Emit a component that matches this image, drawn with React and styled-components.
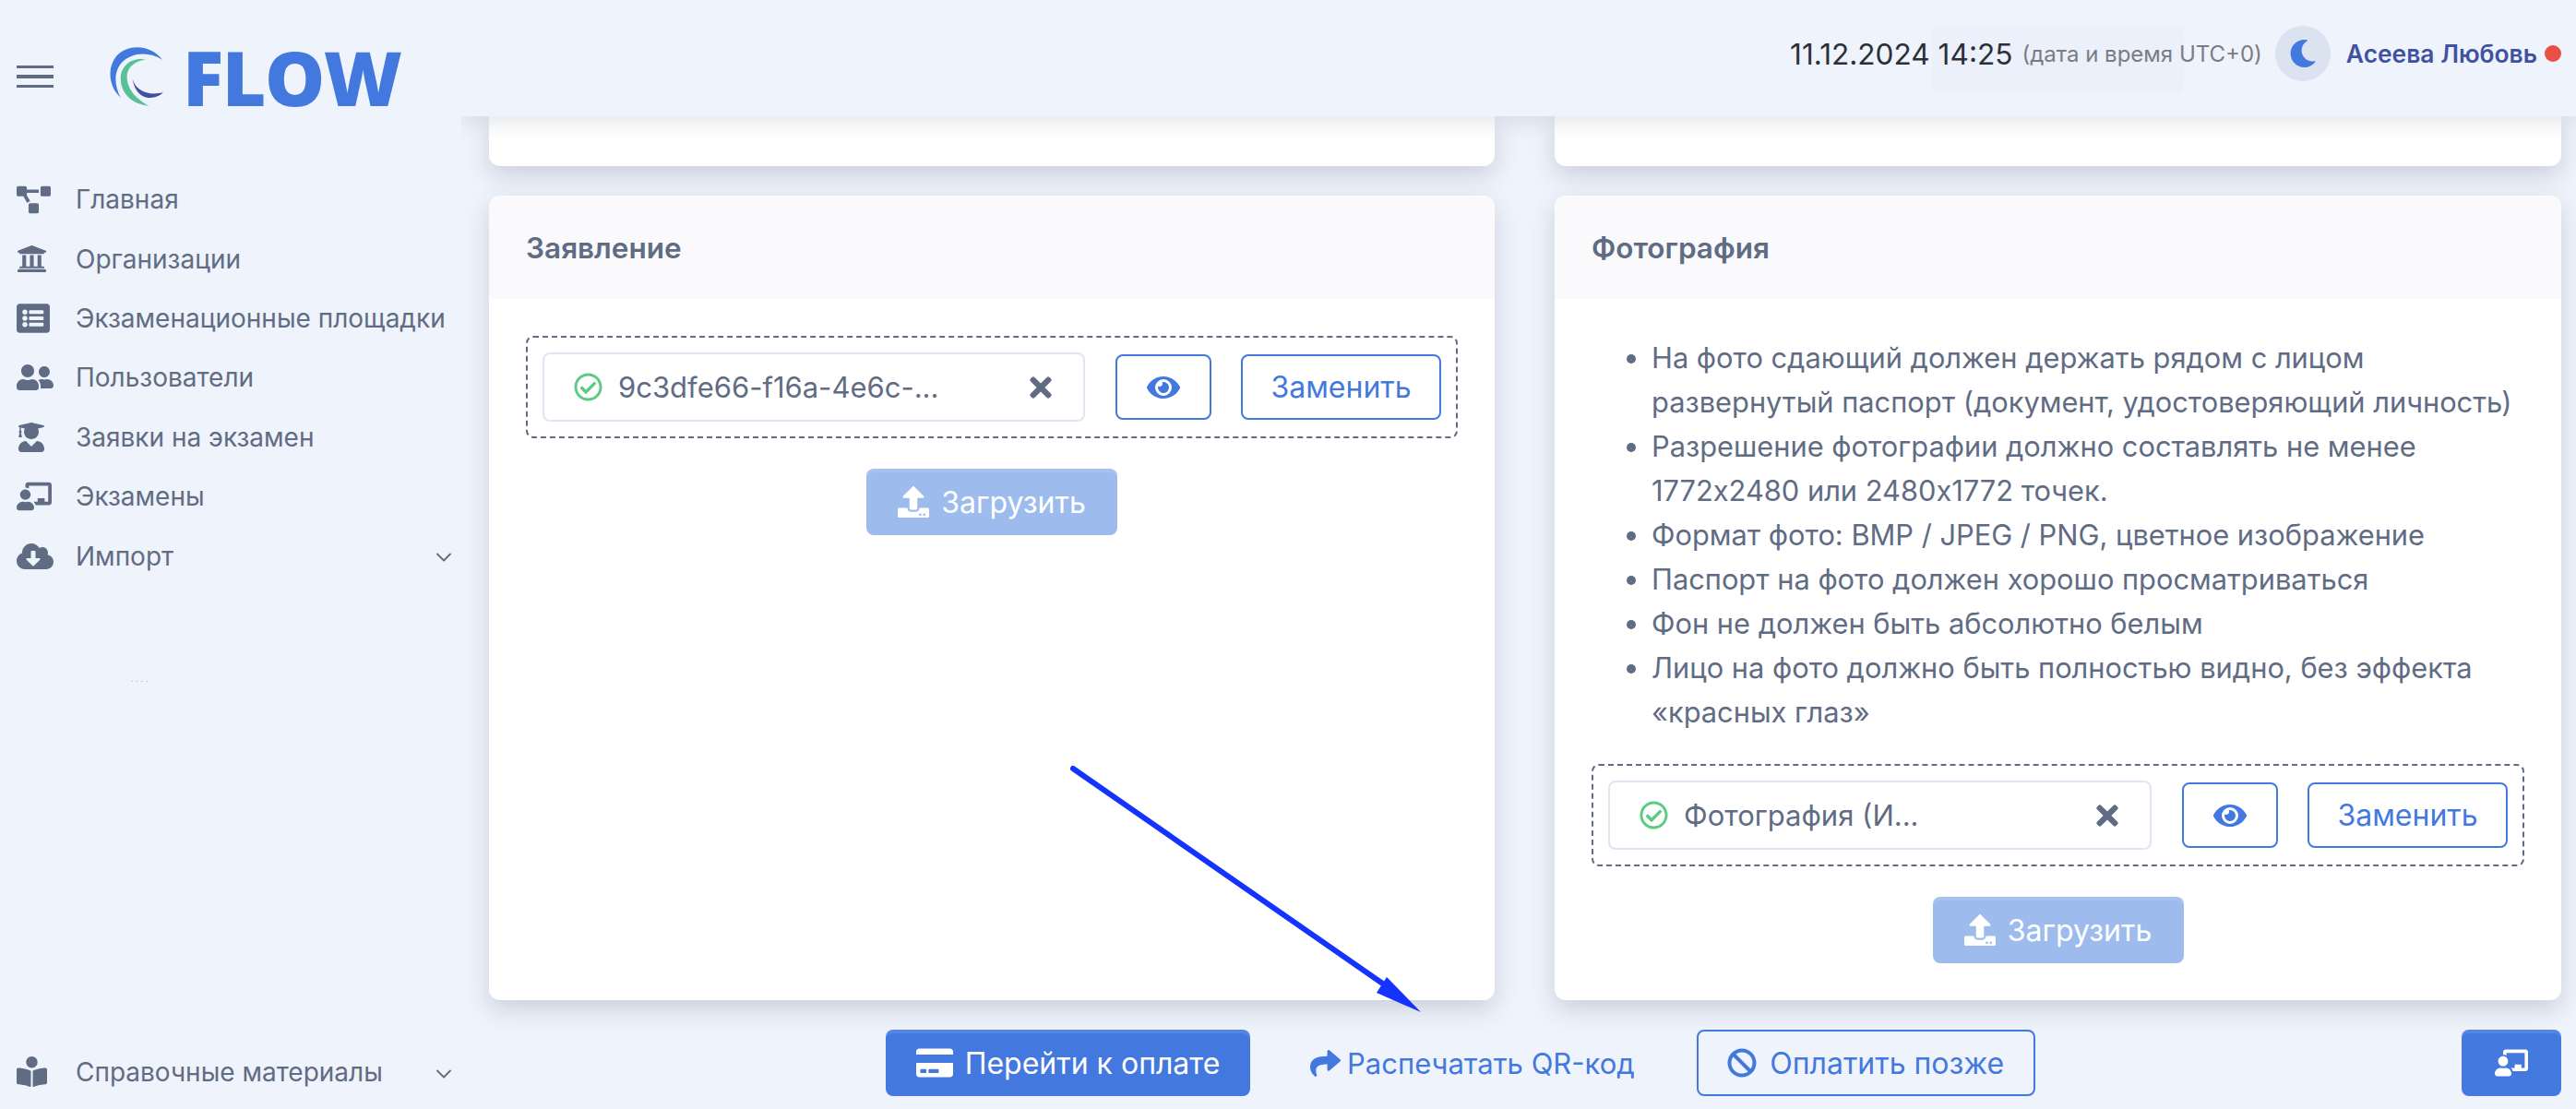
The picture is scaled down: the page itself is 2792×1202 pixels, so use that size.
import React from "react"
import styled, { createGlobalStyle } from "styled-components"
import {
  FaProjectDiagram,
  FaUniversity,
  FaListAlt,
  FaUserFriends,
  FaUserGraduate,
  FaChalkboardTeacher,
  FaCloudDownloadAlt,
  FaBookReader,
  FaMoon,
  FaRegCheckCircle,
  FaTimes,
  FaEye,
  FaUpload,
  FaCreditCard,
  FaShare,
  FaBan,
} from "react-icons/fa"
import { FiChevronDown } from "react-icons/fi"

const BLUE = "#4379de"
const SLATE = "#5f6c84"

const GlobalStyle = createGlobalStyle`
  html, body {
    margin: 0;
    padding: 0;
    background: #eff3fb;
  }
  body {
    font-family: Inter, "Noto Sans", sans-serif;
    color: ${SLATE};
  }
  * {
    box-sizing: border-box;
  }
`

const Shell = styled.div`
  display: flex;
  width: 2792px;
  height: 1202px;
  overflow: hidden;
  position: relative;
  background: #eff3fb;
`

const Sidebar = styled.aside`
  width: 530px;
  flex: none;
  display: flex;
  flex-direction: column;
  padding-bottom: 8px;
`

const Brand = styled.div`
  height: 166px;
  flex: none;
  display: flex;
  align-items: center;
  padding-left: 18px;
`

const Burger = styled.span`
  display: block;
  width: 40px;
  height: 24px;
  margin-right: 61px;
  border-top: 3px solid ${SLATE};
  border-bottom: 3px solid ${SLATE};
  position: relative;
  &::after {
    content: "";
    position: absolute;
    left: 0;
    right: 0;
    top: 7px;
    height: 4px;
    background: ${SLATE};
  }
`

const LogoText = styled.span`
  font-family: "Open Sans", sans-serif;
  font-weight: 800;
  font-size: 82px;
  line-height: 1;
  letter-spacing: -1.5px;
  color: ${BLUE};
  margin-left: 20px;
`

const Nav = styled.nav`
  display: flex;
  flex-direction: column;
  padding-top: 18px;
`

const BottomNav = styled(Nav)`
  margin-top: auto;
  padding-top: 0;
`

const NavItem = styled.div`
  height: 64.4px;
  display: flex;
  align-items: center;
  padding-left: 18px;
  font-size: 28px;
  color: ${SLATE};
  position: relative;
`

const NavIcon = styled.span`
  width: 64px;
  flex: none;
  display: flex;
  align-items: center;
`

const NavChevron = styled(FiChevronDown)`
  position: absolute;
  left: 467px;
  top: 20px;
  font-size: 28px;
  stroke-width: 1.6;
`

const Specks = styled.div`
  margin: 99px 0 0 142px;
  color: #8d97a8;
  font-size: 8px;
  line-height: 4px;
  letter-spacing: 3px;
`

const Main = styled.main`
  flex: 1;
  min-width: 0;
  display: flex;
  flex-direction: column;
`

const TopBar = styled.header`
  height: 126px;
  flex: none;
  margin-left: -30px;
  padding: 0 16px 10px 0;
  background: #eff3fb;
  box-shadow: 0 6px 22px rgba(60, 70, 100, 0.14);
  clip-path: inset(0 0 -40px 0);
  display: flex;
  align-items: center;
  justify-content: flex-end;
  position: relative;
  z-index: 2;
`

const GhostPlate = styled.div`
  position: absolute;
  left: 1594px;
  top: 28px;
  width: 273px;
  height: 72px;
  border-radius: 8px;
  background: rgba(67, 121, 222, 0.025);
`

const DateTime = styled.span`
  font-size: 31.6px;
  color: #2b2f38;
  position: relative;
`

const DateNote = styled.span`
  font-size: 24px;
  color: #7a7c83;
  margin-left: 10px;
  position: relative;
`

const ThemeToggle = styled.span`
  width: 60px;
  height: 60px;
  border-radius: 50%;
  background: #dce3f0;
  display: flex;
  align-items: center;
  justify-content: center;
  color: ${BLUE};
  font-size: 30px;
  margin: 0 17px 0 14px;
`

const UserName = styled.span`
  font-size: 26.4px;
  font-weight: 600;
  color: #3f51a3;
`

const StatusDot = styled.span`
  width: 18px;
  height: 18px;
  border-radius: 50%;
  background: #ea4f45;
  margin-left: 8px;
`

const Content = styled.div`
  padding-right: 16px;
  display: flex;
  flex-direction: column;
`

const Row = styled.div`
  display: grid;
  grid-template-columns: 1090px 1091px;
  column-gap: 65px;
  margin-bottom: 32px;
`

const Card = styled.section`
  background: #fff;
  border-radius: 12px;
  box-shadow: 0 10px 26px rgba(60, 72, 100, 0.2);
  height: ${p => p.$height}px;
  overflow: hidden;
`

const StubCard = styled(Card)`
  border-radius: 0 0 12px 12px;
`

const CardHeader = styled.div`
  height: 112px;
  background: #fafafc;
  padding-left: 40px;
  display: flex;
  align-items: center;
  font-size: 31.5px;
  font-weight: 600;
  color: ${SLATE};
`

const CardBody = styled.div`
  padding: 40px;
  display: flex;
  flex-direction: column;
  align-items: center;
`

const Rules = styled.ul`
  margin: 0 0 32px;
  padding: 0 0 0 65px;
  width: 100%;
  list-style: disc;
  font-size: 30.8px;
  line-height: 48px;
  color: ${SLATE};
`

const FileBox = styled.div`
  width: 100%;
  height: 111px;
  border: 2px dashed ${SLATE};
  border-radius: 8px;
  padding: 0 16px;
  display: flex;
  align-items: center;
`

const FileField = styled.div`
  flex: 1;
  height: 75px;
  border: 2px solid #e0e5f1;
  border-radius: 8px;
  background: #fff;
  display: flex;
  align-items: center;
  padding: 0 29px 0 32px;
  font-size: 31px;
  color: ${SLATE};
  white-space: nowrap;
`

const CheckMark = styled(FaRegCheckCircle)`
  color: #5ccb82;
  font-size: 31px;
  flex: none;
  margin-right: 17px;
`

const ClearMark = styled(FaTimes)`
  color: ${SLATE};
  font-size: 34px;
  flex: none;
  margin-left: auto;
`

const OutlineButton = styled.button`
  height: ${p => p.$height || 71}px;
  width: ${p => p.$width}px;
  flex: none;
  margin-left: ${p => p.$gap || 0}px;
  border: 2px solid ${BLUE};
  border-radius: 8px;
  background: transparent;
  color: ${BLUE};
  font-family: inherit;
  font-size: 32px;
  display: flex;
  align-items: center;
  justify-content: center;
  gap: 14px;
  padding: 0;
`

const SolidButton = styled.button`
  height: 72px;
  width: ${p => p.$width}px;
  flex: none;
  border: none;
  border-radius: 8px;
  background: ${p => (p.$disabled ? "#9dbced" : BLUE)};
  box-shadow: inset 0 4px 0 rgba(255, 255, 255, 0.1);
  color: #fff;
  font-family: inherit;
  font-size: 32px;
  display: flex;
  align-items: center;
  justify-content: center;
  gap: 13px;
  padding: 0;
`

const UploadButton = styled(SolidButton)`
  margin-top: 33px;
`

const Footer = styled.div`
  display: flex;
  align-items: center;
  padding-left: 430px;
`

const TextLink = styled.a`
  color: ${BLUE};
  font-size: 31px;
  display: flex;
  align-items: center;
  gap: 7px;
  margin: 0 67px 0 65px;
  white-space: nowrap;
`

const PushRight = styled.div`
  margin-left: auto;
`

const Annotation = styled.svg`
  position: absolute;
  left: 0;
  top: 0;
  width: 2792px;
  height: 1202px;
  pointer-events: none;
  z-index: 3;
`

const navItems = [
  { label: "Главная", icon: <FaProjectDiagram size={37} /> },
  { label: "Организации", icon: <FaUniversity size={33} /> },
  { label: "Экзаменационные площадки", icon: <FaListAlt size={36} /> },
  { label: "Пользователи", icon: <FaUserFriends size={40} /> },
  { label: "Заявки на экзамен", icon: <FaUserGraduate size={32} /> },
  { label: "Экзамены", icon: <FaChalkboardTeacher size={38} /> },
  { label: "Импорт", icon: <FaCloudDownloadAlt size={40} />, more: true },
]

const rules = [
  "На фото сдающий должен держать рядом с лицом развернутый паспорт (документ, удостоверяющий личность)",
  "Разрешение фотографии должно составлять не менее 1772х2480 или 2480х1772 точек.",
  "Формат фото: BMP / JPEG / PNG, цветное изображение",
  "Паспорт на фото должен хорошо просматриваться",
  "Фон не должен быть абсолютно белым",
  "Лицо на фото должно быть полностью видно, без эффекта «красных глаз»",
]

const Logo = () => (
  <svg width="59" height="65" viewBox="0 0 60 57" preserveAspectRatio="none">
    <path
      d="M58 12C46 -2 21 -4 8 8C-3 19 -2 37 12 48C5 37 4 24 13 15C24 5 43 4 58 12Z"
      fill="#4379de"
    />
    <path
      d="M40 12C24 9 12 18 12 30C12 43 23 54 43 56C31 50 20 42 19 30C18 20 27 13 40 12Z"
      fill="#5cc096"
    />
    <path d="M25 30C28 41 42 47 59 43C50 51 29 52 25 30Z" fill="#3f51a3" />
  </svg>
)

const FileRow = ({ name }) => (
  <FileBox>
    <FileField>
      <CheckMark />
      {name}
      <ClearMark />
    </FileField>
    <OutlineButton $width={104} $gap={33}>
      <FaEye size={36} />
    </OutlineButton>
    <OutlineButton $width={217} $gap={32}>
      Заменить
    </OutlineButton>
  </FileBox>
)

const Upload = () => (
  <UploadButton $width={272} $disabled>
    <FaUpload size={34} />
    Загрузить
  </UploadButton>
)

const App = () => (
  <Shell>
    <GlobalStyle />
    <Sidebar>
      <Brand>
        <Burger />
        <Logo />
        <LogoText>FLOW</LogoText>
      </Brand>
      <Nav>
        {navItems.map(item => (
          <NavItem key={item.label}>
            <NavIcon>{item.icon}</NavIcon>
            {item.label}
            {item.more ? <NavChevron /> : null}
          </NavItem>
        ))}
      </Nav>
      <Specks>....</Specks>
      <BottomNav>
        <NavItem>
          <NavIcon>
            <FaBookReader size={33} />
          </NavIcon>
          Справочные материалы
          <NavChevron />
        </NavItem>
      </BottomNav>
    </Sidebar>
    <Main>
      <TopBar>
        <GhostPlate />
        <DateTime>11.12.2024 14:25</DateTime>
        <DateNote>(дата и время UTC+0)</DateNote>
        <ThemeToggle>
          <FaMoon />
        </ThemeToggle>
        <UserName>Асеева Любовь</UserName>
        <StatusDot />
      </TopBar>
      <Content>
        <Row>
          <StubCard $height={54} />
          <StubCard $height={54} />
        </Row>
        <Row>
          <Card $height={872}>
            <CardHeader>Заявление</CardHeader>
            <CardBody>
              <FileRow name="9c3dfe66-f16a-4e6c-..." />
              <Upload />
            </CardBody>
          </Card>
          <Card $height={872}>
            <CardHeader>Фотография</CardHeader>
            <CardBody>
              <Rules>
                {rules.map(rule => (
                  <li key={rule}>{rule}</li>
                ))}
              </Rules>
              <FileRow name="Фотография (И..." />
              <Upload />
            </CardBody>
          </Card>
        </Row>
        <Footer>
          <SolidButton $width={395}>
            <FaCreditCard size={40} />
            Перейти к оплате
          </SolidButton>
          <TextLink>
            <FaShare size={33} />
            Распечатать QR-код
          </TextLink>
          <OutlineButton $width={367} $height={72}>
            <FaBan size={32} />
            Оплатить позже
          </OutlineButton>
          <PushRight>
            <SolidButton $width={108}>
              <FaChalkboardTeacher size={36} />
            </SolidButton>
          </PushRight>
        </Footer>
      </Content>
    </Main>
    <Annotation viewBox="0 0 2792 1202">
      <line
        x1="1163"
        y1="833"
        x2="1500"
        y2="1067"
        stroke="#1433ff"
        strokeWidth="6"
        strokeLinecap="round"
      />
      <polygon points="1540,1097 1503,1059 1492,1076" fill="#1433ff" />
    </Annotation>
  </Shell>
)

export default App
